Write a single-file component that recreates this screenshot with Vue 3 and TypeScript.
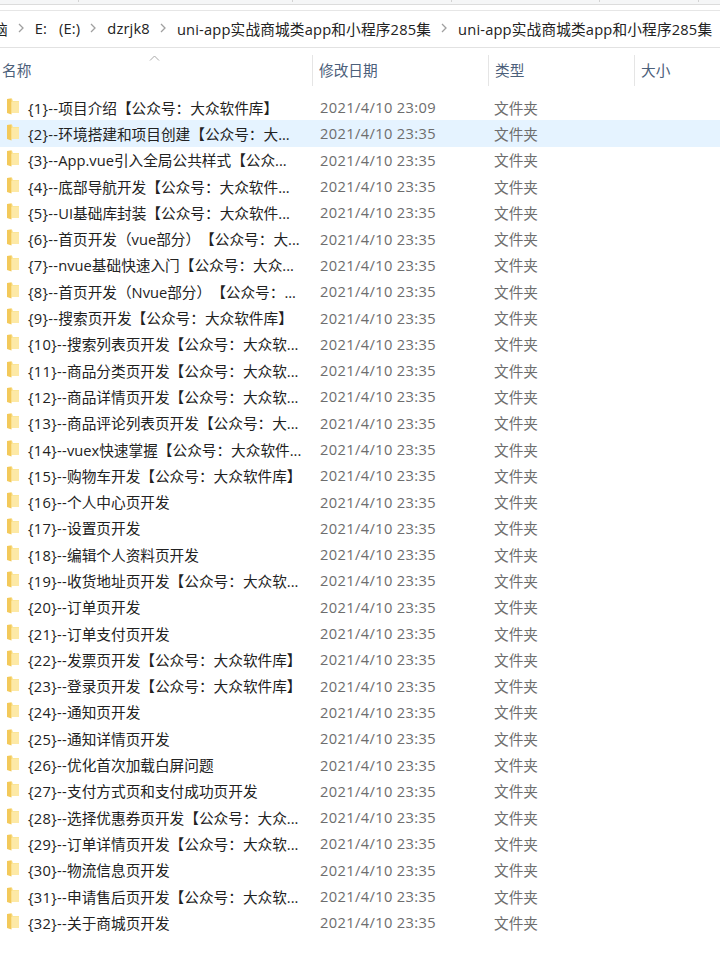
<script setup lang="ts">
interface Row {
  n: number;
  name: string;
  time?: string;
}

const cols = [
  { label: "名称", cls: "col-name" },
  { label: "修改日期", cls: "col-date" },
  { label: "类型", cls: "col-type" },
  { label: "大小", cls: "col-size" },
];

// leftovers of the ribbon's group separators along the top edge
const ticks = [78, 292, 451, 599, 698];

const crumbs = ["E:\u00a0\u00a0\u00a0(E:)", "dzrjk8", "uni-app实战商城类app和小程序285集", "uni-app实战商城类app和小程序285集"];

const rows: Row[] = [
  { n: 1, name: "项目介绍【公众号：大众软件库】", time: "23:09" },
  { n: 2, name: "环境搭建和项目创建【公众号：大..." },
  { n: 3, name: "App.vue引入全局公共样式【公众..." },
  { n: 4, name: "底部导航开发【公众号：大众软件..." },
  { n: 5, name: "UI基础库封装【公众号：大众软件..." },
  { n: 6, name: "首页开发（vue部分）【公众号：大..." },
  { n: 7, name: "nvue基础快速入门【公众号：大众..." },
  { n: 8, name: "首页开发（Nvue部分）【公众号：..." },
  { n: 9, name: "搜索页开发【公众号：大众软件库】" },
  { n: 10, name: "搜索列表页开发【公众号：大众软..." },
  { n: 11, name: "商品分类页开发【公众号：大众软..." },
  { n: 12, name: "商品详情页开发【公众号：大众软..." },
  { n: 13, name: "商品评论列表页开发【公众号：大..." },
  { n: 14, name: "vuex快速掌握【公众号：大众软件..." },
  { n: 15, name: "购物车开发【公众号：大众软件库】" },
  { n: 16, name: "个人中心页开发" },
  { n: 17, name: "设置页开发" },
  { n: 18, name: "编辑个人资料页开发" },
  { n: 19, name: "收货地址页开发【公众号：大众软..." },
  { n: 20, name: "订单页开发" },
  { n: 21, name: "订单支付页开发" },
  { n: 22, name: "发票页开发【公众号：大众软件库】" },
  { n: 23, name: "登录页开发【公众号：大众软件库】" },
  { n: 24, name: "通知页开发" },
  { n: 25, name: "通知详情页开发" },
  { n: 26, name: "优化首次加载白屏问题" },
  { n: 27, name: "支付方式页和支付成功页开发" },
  { n: 28, name: "选择优惠券页开发【公众号：大众..." },
  { n: 29, name: "订单详情页开发【公众号：大众软..." },
  { n: 30, name: "物流信息页开发" },
  { n: 31, name: "申请售后页开发【公众号：大众软..." },
  { n: 32, name: "关于商城页开发" },
];

function rowPrefix(r: Row): string {
  return "{" + r.n + "}--";
}
</script>

<template>
  <div class="explorer">
    <div class="ribbon-edge">
      <i v-for="t in ticks" :key="t" class="tick" :style="{ left: t + 'px' }" />
    </div>
    <nav class="crumbs">
      <span class="crumb-cut">脑</span>
      <template v-for="(c, i) in crumbs" :key="i">
        <svg class="chev" width="6" height="10" viewBox="0 0 6 10" aria-hidden="true">
          <path d="M1 1l4 4-4 4" fill="none" stroke="#a0a0a0" stroke-width="1.3" />
        </svg>
        <span class="crumb">{{ c }}</span>
      </template>
    </nav>
    <header class="head">
      <svg class="sort" width="11" height="6" viewBox="0 0 11 6" aria-hidden="true">
        <path d="M1 5.5l4.5-4.5 4.5 4.5" fill="none" stroke="#a8a8a8" stroke-width="1" />
      </svg>
      <div v-for="c in cols" :key="c.label" class="head-cell" :class="c.cls">{{ c.label }}</div>
    </header>
    <ul class="list">
      <li v-for="r in rows" :key="r.n" class="row" :class="{ 'row--hover': r.n === 2 }">
        <div class="col-name name-cell">
          <svg class="folder" width="12" height="17" viewBox="0 0 12 17" aria-hidden="true">
            <path d="M0 1L5 .5 6 3h6v12H0z" fill="#fbe596" />
            <path d="M0 1l4.5-.5V16.5L0 15z" fill="#f3c95a" />
            <path d="M4.5 4H12v11H4.5z" fill="#fde9a6" />
          </svg>
          <span class="name"><span class="prefix">{{ rowPrefix(r) }}</span>{{ r.name }}</span>
        </div>
        <div class="col-date cell date">2021/4/10 {{ r.time ?? "23:35" }}</div>
        <div class="col-type cell type">文件夹</div>
      </li>
    </ul>
  </div>
</template>

<style>
html, body {
  margin: 0;
  background: #fff;
}
</style>

<style scoped>
.explorer {
  width: 720px;
  height: 953px;
  overflow: hidden;
  position: relative;
  font-family: "Open Sans", "Noto Sans CJK SC", sans-serif;
  text-spacing-trim: space-all;
}
.ribbon-edge {
  height: 4px;
  background: #f5f6f7;
  border-bottom: 1px solid #dcdcdc;
  position: relative;
}
.tick {
  position: absolute;
  top: 0;
  width: 1px;
  height: 2px;
  background: #d4d4d4;
}
.crumbs {
  height: 34px;
  padding-bottom: 2px;
  margin-top: 5px;
  border-top: 1px solid #e6e6e6;
  border-bottom: 1px solid #e2e2e2;
  display: flex;
  align-items: center;
  white-space: nowrap;
  font-size: 14.67px;
  color: #222;
}
.crumb-cut {
  margin-left: -7px;
}
.crumb {
  letter-spacing: 0.17px;
}
.chev {
  margin: 0 11px 0 10px;
}
.head {
  display: flex;
  height: 31px;
  margin-top: 7px;
  position: relative;
}
.sort {
  position: absolute;
  left: 149px;
  top: 0;
}
.head-cell {
  font-size: 14.67px;
  color: #4c607a;
  line-height: 31px;
  box-sizing: border-box;
  padding-left: 6px;
  border-left: 1px solid #e5e5e5;
}
.head-cell.col-name {
  border-left: 0;
  padding-left: 2px;
}
.col-name { width: 312px; }
.col-date { width: 176px; }
.col-type { width: 146px; }
.col-size { width: 86px; }
.list {
  list-style: none;
  margin: 8px 0 0;
  padding: 0;
}
.row {
  display: flex;
  align-items: center;
  height: 26.3px;
}
.row--hover {
  background: #e5f3ff;
}
.name-cell {
  display: flex;
  align-items: center;
  box-sizing: border-box;
  padding-left: 7px;
}
.folder {
  flex: none;
  margin-top: -2px;
}
.name {
  margin-left: 9px;
  font-size: 14.67px;
  color: #222;
  white-space: nowrap;
}
.prefix {
  letter-spacing: 0.3px;
}
.cell {
  box-sizing: border-box;
  font-size: 14.67px;
  color: #6d6d6d;
}
.date {
  padding-left: 8px;
  letter-spacing: 0.36px;
}
.type {
  padding-left: 6px;
}
</style>
